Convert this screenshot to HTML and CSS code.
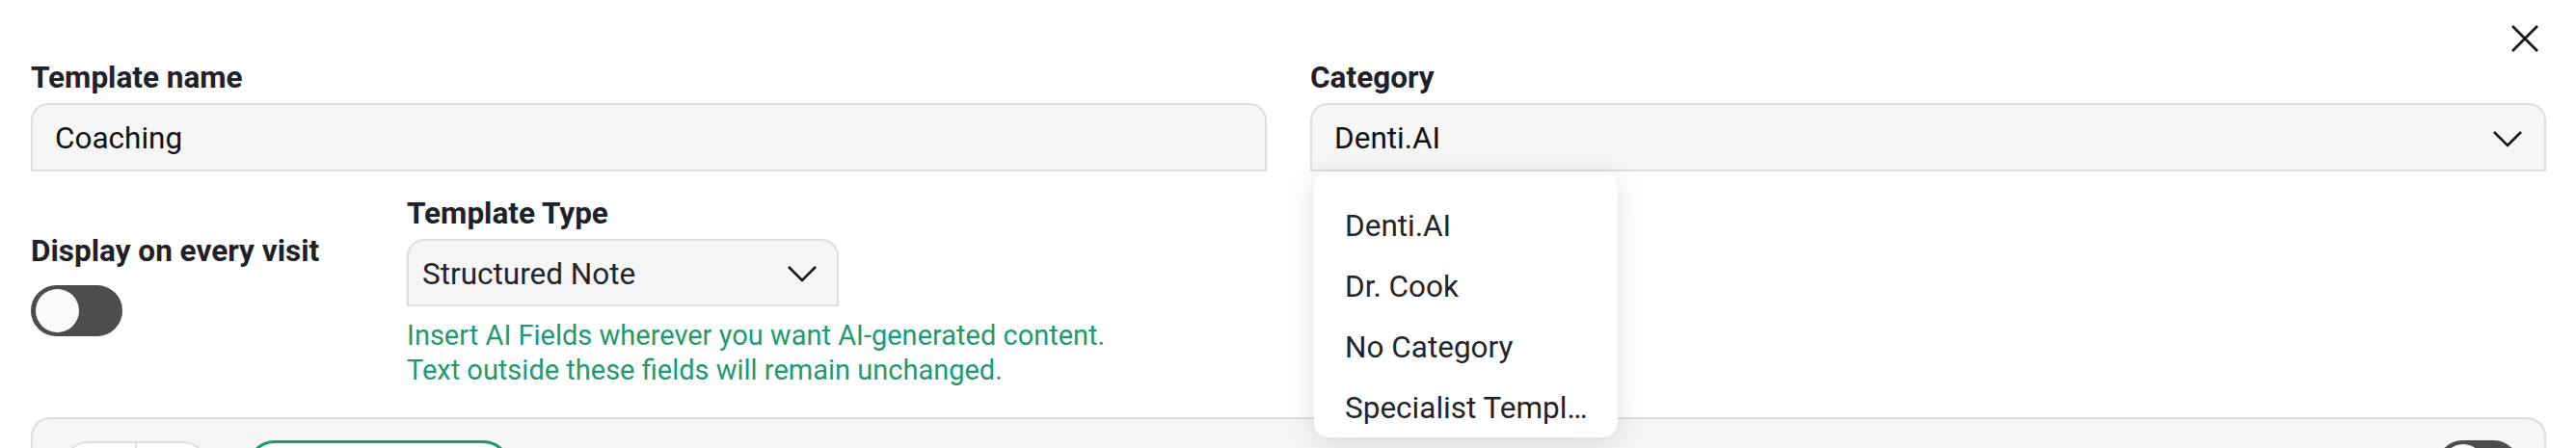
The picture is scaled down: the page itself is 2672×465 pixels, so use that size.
FILE: index.html
```html
<!DOCTYPE html>
<html lang="en">
<head>
    <meta charset="UTF-8">
    <meta name="viewport" content="width=device-width, initial-scale=1.0">
    <title>Edit Template</title>
    <link rel="stylesheet" href="styles.css">
</head>
<body>
    <div class="modal">
        <div class="modal-head">
            <button class="close-btn" aria-label="Close">
                <svg width="30" height="28" viewBox="0 0 30 28">
                    <line x1="2" y1="1" x2="28" y2="27" />
                    <line x1="28" y1="1" x2="2" y2="27" />
                </svg>
            </button>
        </div>

        <div class="field-row">
            <div class="field">
                <label class="field-label">Template name</label>
                <div class="text-input">Coaching</div>
            </div>
            <div class="field">
                <label class="field-label">Category</label>
                <div class="select-wrap">
                    <div class="select-input">
                        <span>Denti.AI</span>
                        <svg class="chevron" width="32" height="18" viewBox="0 0 32 18">
                            <polyline points="2,2 16,16 30,2" />
                        </svg>
                    </div>
                    <ul class="dropdown">
                        <li>Denti.AI</li>
                        <li>Dr. Cook</li>
                        <li>No Category</li>
                        <li>Specialist Templates</li>
                    </ul>
                </div>
            </div>
        </div>

        <div class="options-row">
            <div class="visit-option">
                <div class="field-label">Display on every visit</div>
                <span class="switch"><span class="knob"></span></span>
            </div>
            <div class="type-option">
                <div class="field-label">Template Type</div>
                <div class="select-input type-select">
                    <span>Structured Note</span>
                    <svg class="chevron" width="32" height="18" viewBox="0 0 32 18">
                        <polyline points="2,2 16,16 30,2" />
                    </svg>
                </div>
                <p class="hint">Insert AI Fields wherever you want AI-generated content.<br>Text outside these fields will remain unchanged.</p>
            </div>
        </div>

        <div class="editor">
            <div class="editor-toolbar">
                <div class="btn-group">
                    <span></span>
                    <span></span>
                </div>
                <button class="ai-btn"></button>
                <span class="switch small"><span class="knob"></span></span>
            </div>
        </div>
    </div>
</body>
</html>
```

FILE: styles.css
```css
html, body {
    margin: 0;
    padding: 0;
    overflow: hidden;
    background-color: #fff;
}
body {
    font-family: Roboto, "Noto Sans", Arial, sans-serif;
    color: #1f2128;
}
.modal {
    padding: 0 31px 0 32px;
}
.modal-head {
    height: 62px;
    box-sizing: border-box;
    padding: 26px 7px 0 0;
    display: flex;
    justify-content: flex-end;
    align-items: flex-start;
}
.close-btn {
    background: none;
    border: none;
    padding: 0;
    cursor: pointer;
    display: block;
}
.close-btn svg {
    display: block;
}
.close-btn line {
    stroke: #111;
    stroke-width: 2.6;
}
.field-row {
    display: grid;
    grid-template-columns: 1fr 1fr;
    gap: 45px;
}
.field-label {
    display: block;
    font-size: 31.5px;
    font-weight: 700;
    line-height: 38px;
    margin-bottom: 7px;
    color: #1f2128;
}
.text-input,
.select-input {
    height: 71px;
    box-sizing: border-box;
    border: 2px solid #dedede;
    border-radius: 18px 18px 0 0;
    background-color: #f6f6f6;
    padding: 2px 22px 0 23px;
    font-size: 31.5px;
    color: #111;
    display: flex;
    align-items: center;
}
.select-input {
    justify-content: space-between;
}
.chevron polyline {
    fill: none;
    stroke: #111;
    stroke-width: 2.6;
}
.select-wrap {
    position: relative;
}
.dropdown {
    position: absolute;
    top: 100%;
    left: 4px;
    z-index: 10;
    width: 315px;
    height: 276px;
    box-sizing: border-box;
    margin: 0;
    padding: 25px 0 0;
    list-style: none;
    background-color: #fff;
    border-radius: 15px;
    box-shadow: 0 6px 32px rgba(0, 0, 0, 0.12);
    overflow: hidden;
}
.dropdown li {
    height: 63px;
    line-height: 63px;
    padding: 0 22px 0 32px;
    font-size: 31.5px;
    color: #22242a;
    white-space: nowrap;
    overflow: hidden;
    text-overflow: ellipsis;
}
.options-row {
    display: flex;
    padding-top: 25px;
}
.visit-option {
    width: 390px;
    padding-top: 39px;
}
.visit-option .field-label {
    margin-bottom: 16px;
}
.switch {
    display: block;
    width: 95px;
    height: 53px;
    box-sizing: border-box;
    padding: 4px 5px;
    border-radius: 27px;
    background-color: #4d4d4d;
}
.knob {
    display: block;
    width: 45px;
    height: 45px;
    border-radius: 50%;
    background-color: #fafafa;
}
.type-select {
    width: 448px;
    height: 70px;
    padding: 2px 20px 0 14px;
    color: #22242a;
}
.hint {
    margin: 12px 0 0;
    font-size: 29px;
    line-height: 36px;
    color: #1e9a6e;
}
.editor {
    margin-top: 31px;
    border: 2px solid #dedede;
    border-bottom: none;
    border-radius: 20px 20px 0 0;
    background-color: #f5f5f5;
    height: 120px;
    padding: 23px 27px 0 33px;
}
.editor-toolbar {
    display: flex;
    align-items: flex-start;
}
.btn-group {
    display: flex;
    width: 147px;
    height: 56px;
    box-sizing: border-box;
    border: 2px solid #dedede;
    border-radius: 24px;
    background-color: #fff;
    overflow: hidden;
}
.btn-group span {
    width: 72px;
}
.btn-group span + span {
    border-left: 2px solid #dedede;
}
.ai-btn {
    margin: -1px 0 0 42px;
    width: 274px;
    height: 58px;
    border: 3px solid #1e9a6e;
    border-radius: 29px;
    background-color: #fff;
}
.switch.small {
    margin: -1px 0 0 auto;
    width: 83px;
    height: 50px;
}
.switch.small .knob {
    width: 42px;
    height: 42px;
}
```
